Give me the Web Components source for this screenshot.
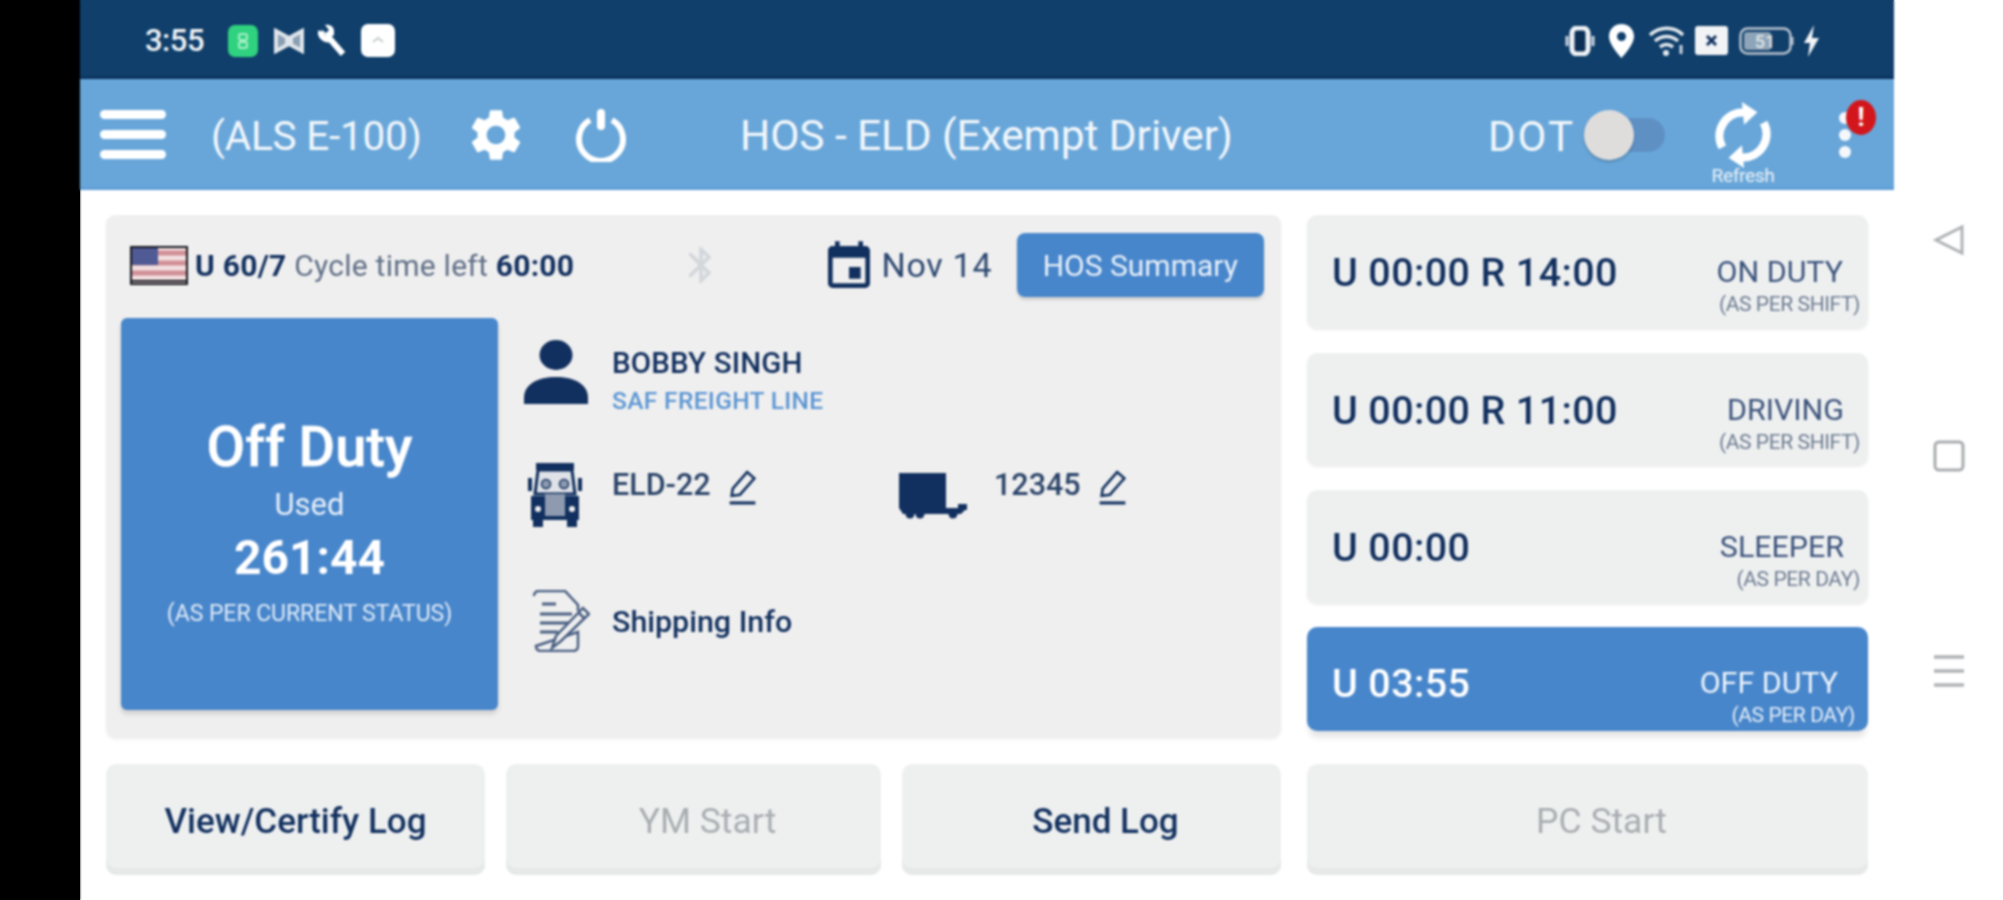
<!DOCTYPE html>
<html>
<head>
<meta charset="utf-8">
<title>HOS - ELD</title>
<style>
    html, body{ margin: 0; height: 100%; overflow: hidden; }
    body{
        font-family: Roboto, "Liberation Sans", sans-serif;
        color: #12305f;
        background:
            linear-gradient(90deg, #000 80px, transparent 80px),
            linear-gradient(90deg, transparent 80px, #103f6b 80px, #103f6b 1894px, transparent 1894px) no-repeat top / 100% 40px,
            #fff;
    }
</style>
</head>
<body>
<eld-app></eld-app>

<template id="tpl-app">
    <style>
        :host{ display: grid; grid-template-columns: 80px 1814px 109px; width: 2003px; height: 900px; filter: blur(1px); }
        .Black{ background: #000; }
        .Phone{ display: flex; flex-direction: column; min-width: 0; }
        .Content{
            display: grid;
            grid-template-columns: 1175px 561px;
            grid-template-rows: 523px 111px;
            column-gap: 26px;
            row-gap: 26px;
            padding: 25px 26px 0 26px;
        }
        .Stack{ display: flex; flex-direction: column; height: 516px; }
        .Buttons{ display: grid; grid-template-columns: 379px 375px 379px; column-gap: 21px; }
    </style>
    <div class="Black"></div>
    <div class="Phone">
        <eld-status-bar></eld-status-bar>
        <eld-toolbar></eld-toolbar>
        <div class="Content">
            <eld-main-card></eld-main-card>
            <div class="Stack">
                <eld-duty-card time="U 00:00 R 14:00" label="ON DUTY" sub="(AS PER SHIFT)" style="height:113px;margin-bottom:25px;--lab:17px"></eld-duty-card>
                <eld-duty-card time="U 00:00 R 11:00" label="DRIVING" sub="(AS PER SHIFT)" style="height:112px;margin-bottom:25px;--lab:16px"></eld-duty-card>
                <eld-duty-card time="U 00:00" label="SLEEPER" sub="(AS PER DAY)" style="height:113px;margin-bottom:24px;--lab:16px;--r:8px"></eld-duty-card>
                <eld-duty-card active time="U 03:55" label="OFF DUTY" sub="(AS PER DAY)" style="height:104px;--lab:17px;--r:13px"></eld-duty-card>
            </div>
            <div class="Buttons">
                <eld-action-button>View/Certify Log</eld-action-button>
                <eld-action-button disabled shift>YM Start</eld-action-button>
                <eld-action-button shift>Send Log</eld-action-button>
            </div>
            <eld-action-button disabled shift>PC Start</eld-action-button>
        </div>
    </div>
    <eld-nav-bar></eld-nav-bar>
</template>

<template id="tpl-status">
    <style>
        :host{ display: flex; align-items: center; height: 79px; background: #103f6b; box-shadow: inset 0 -3px 2px -1px #0a2f58; padding: 2px 74px 0 65px; box-sizing: border-box; color: #eef2f5; }
        .Time{ font-size: 31px; font-weight: 500; letter-spacing: -.5px; width: 60px; margin-right: 23px; }
        svg{ display: block; flex: none; }
        .Left{ display: flex; align-items: center; gap: 14px; }
        .Right{ display: flex; align-items: center; margin-left: auto; }
    </style>
    <span class="Time">3:55</span>
    <div class="Left">
        <svg width="30" height="32" viewBox="0 0 30 32"><rect width="30" height="32" rx="7" fill="#2fd27f"/><rect x="11" y="9" width="8" height="6" rx="2" fill="none" stroke="#a8efc8" stroke-width="2"/><rect x="11" y="17" width="8" height="6" rx="2" fill="none" stroke="#a8efc8" stroke-width="2"/></svg>
        <svg width="30" height="26" viewBox="0 0 30 26" style="margin-left:2px"><path d="M2 3l11 6v8L2 23zM28 3l-11 6v8l11 6z" fill="#8b9fb3" stroke="#dfe5ea" stroke-width="4"/></svg>
        <svg width="30" height="34" viewBox="0 0 30 34"><path d="M3 7a7 7 0 0 0 9 8l13 15" fill="none" stroke="#fff" stroke-width="6"/><path d="M3 5l5 4 3-3-4-5c4-1 9 1 9 6v4l-6 4z" fill="#fff"/></svg>
        <svg width="34" height="33" viewBox="0 0 34 33" style="margin-left:-1px"><rect width="34" height="33" rx="7" fill="#fff"/><path d="M12 18l5-4 5 4" fill="none" stroke="#c6cbcf" stroke-width="2"/></svg>
    </div>
    <div class="Right">
        <svg width="30" height="30" viewBox="0 0 30 30" style="margin-right:13px"><rect x="7" y="2" width="16" height="26" rx="5" fill="#0c2f55" stroke="#eef2f5" stroke-width="5"/><path d="M2 10v10M28 10v10" stroke="#cdd6de" stroke-width="3"/></svg>
        <svg width="27" height="34" viewBox="0 0 27 34" style="margin-right:13px"><path fill-rule="evenodd" d="M13.5 0C6 0 1 5.500 1 12.500 1 21 13.500 34 13.500 34S26 21 26 12.500C26 5.500 21 0 13.500 0zm0 8a4.500 4.500 0 1 1 0 9 4.500 4.500 0 0 1 0-9z" fill="#fff"/></svg>
        <svg width="37" height="34" viewBox="0 0 37 34" style="margin-right:10px"><g fill="none" stroke="#e2e8ed" stroke-width="3.500"><path d="M2 11c10-9 24-9 33 0M7 17c7-6 16-6 23 0M12 23c4-3 9-3 13 0"/></g><circle cx="18" cy="29" r="3" fill="#e2e8ed"/><path d="M33 21v9" stroke="#cdd6de" stroke-width="3"/></svg>
        <svg width="33" height="29" viewBox="0 0 33 29" style="margin-right:11px"><rect width="33" height="29" rx="3" fill="#f1f3f5"/><path d="M12 10l9 9M21 10l-9 9" stroke="#12305f" stroke-width="3"/></svg>
        <svg width="56" height="28" viewBox="0 0 56 28" style="margin-right:8px"><rect x="1.500" y="1.500" width="50" height="25" rx="7" fill="none" stroke="#b9c4cf" stroke-width="2.500"/><rect x="5" y="5" width="27" height="18" rx="3" fill="#8ea4b8"/><path d="M53 10v8" stroke="#b9c4cf" stroke-width="3"/><text x="26" y="21" text-anchor="middle" font-size="18" font-weight="500" fill="#dfe5ea" font-family="Roboto">51</text></svg>
        <svg width="17" height="32" viewBox="0 0 17 32"><path d="M11 0L1 18h6l-2 14 11-19H9z" fill="#f1f3f5"/></svg>
    </div>
</template>

<template id="tpl-toolbar">
    <style>
        :host{ display: flex; align-items: center; height: 111px; background: #68a6d9; box-shadow: inset 0 -4px 3px -2px #5c9bd3; color: #f2f7fb; box-sizing: border-box; padding-left: 20px; position: relative; }
        svg{ display: block; flex: none; }
        .Burger{ display: flex; flex-direction: column; gap: 11px; width: 66px; }
        .Burger i{ display: block; height: 9px; border-radius: 5px; background: #fff; }
        .Unit{ font-size: 40.500px; margin: 2px 0 0 45px; width: 210px; white-space: nowrap; letter-spacing: -.2px; }
        .Title{ font-size: 42.500px; margin: 2px 0 0 112px; white-space: nowrap; width: 748px; letter-spacing: -.1px; }
        .Dot{ font-size: 42px; width: 90px; letter-spacing: 2px; margin-top: 3px; }
        .Toggle{ position: relative; width: 72px; height: 34px; background: #5f90c4; border-radius: 17px; margin-left: 15px; }
        .Toggle::before{ content: ""; position: absolute; left: -9px; top: -8px; width: 50px; height: 50px; border-radius: 50%; background: #dedddc; box-shadow: 0 2px 3px #0003; }
        .Refresh{ margin-left: 45px; width: 66px; display: flex; flex-direction: column; align-items: center; position: relative; height: 66px; }
        .Refresh span{ position: absolute; top: 62px; font-size: 19px; letter-spacing: -.3px; color: #e8f1f8; white-space: nowrap; }
        .Kebab{ position: relative; margin-left: 63px; display: flex; flex-direction: column; gap: 5px; }
        .Kebab i{ display: block; width: 12px; height: 12px; border-radius: 50%; background: #f5f8fb; }
        .Kebab b{ position: absolute; left: 7px; top: -12px; width: 30px; height: 35px; border-radius: 50%; background: #d3161b; color: #fff; font-size: 26px; line-height: 35px; text-align: center; font-weight: 700; }
    </style>
    <div class="Burger"><i></i><i></i><i></i></div>
    <span class="Unit">(ALS E-100)</span>
    <svg width="62" height="62" viewBox="0 0 24 24" fill="#fff" style="margin-left:44px"><path d="M19.14 12.94c.04-.3.06-.61.06-.94 0-.32-.02-.64-.07-.94l2.03-1.58c.18-.14.23-.41.12-.61l-1.92-3.32c-.12-.22-.37-.29-.59-.22l-2.39.96c-.5-.38-1.03-.7-1.62-.94l-.36-2.54c-.04-.24-.24-.41-.48-.41h-3.84c-.24 0-.43.17-.47.41l-.36 2.54c-.59.24-1.13.57-1.62.94l-2.39-.96c-.22-.08-.47 0-.59.22L2.74 8.87c-.12.21-.08.47.12.61l2.03 1.58c-.05.3-.09.63-.09.94s.02.64.07.94l-2.03 1.58c-.18.14-.23.41-.12.61l1.92 3.32c.12.22.37.29.59.22l2.39-.96c.5.38 1.03.7 1.62.94l.36 2.54c.05.24.24.41.48.41h3.84c.24 0 .44-.17.47-.41l.36-2.54c.59-.24 1.13-.56 1.62-.94l2.39.96c.22.08.47 0 .59-.22l1.92-3.32c.12-.22.07-.47-.12-.61l-2.01-1.58zM12 15.6c-1.98 0-3.6-1.62-3.6-3.6s1.62-3.6 3.6-3.6 3.6 1.62 3.6 3.6-1.62 3.6-3.6 3.6z"/></svg>
    <svg width="54" height="54" viewBox="0 0 54 54" fill="none" stroke="#fff" style="margin-left:47px"><path d="M16 12a22 22 0 1 0 22 0" stroke-width="6"/><path d="M27 5v13" stroke-width="8" stroke-linecap="round"/></svg>
    <span class="Title">HOS - ELD (Exempt Driver)</span>
    <span class="Dot">DOT</span>
    <div class="Toggle"></div>
    <div class="Refresh">
        <svg width="66" height="66" viewBox="0 0 64 64" fill="none" stroke="#fff" stroke-width="8"><path d="M12 44A23 23 0 0 1 33 10"/><path d="M52 20A23 23 0 0 1 31 54"/><path d="M31 0l15 10-13 12z" fill="#fff" stroke="none"/><path d="M33 64L18 54l13-12z" fill="#fff" stroke="none"/></svg>
        <span>Refresh</span>
    </div>
    <div class="Kebab"><i></i><i></i><i></i><b>!</b></div>
</template>

<template id="tpl-main">
    <style>
        :host{ display: block; height: 523px; background: #efefef; border-radius: 9px; box-sizing: border-box; padding: 18px 17px 0 15px; box-shadow: 0 2px 3px #0000000d; }
        svg{ display: block; flex: none; }
        .Top{ display: flex; align-items: center; height: 64px; margin-bottom: 21px; padding-left: 9px; }
        .Cycle{ font-size: 30px; letter-spacing: .25px; margin-left: 7px; white-space: nowrap; width: 383px; color: #5f6e86; }
        .Cycle b{ font-weight: 700; color: #12305f; }
        .Bt{ margin-left: 103px; }
        .Cal{ margin: 4px 0 0 98px; }
        .Date{ font-size: 34px; margin-left: 5px; color: #2c4770; width: 138px; letter-spacing: .7px; }
        .Hos{ width: 249px; margin-left: -2px; height: 64px; background: #4886cb; border-radius: 8px; color: #e8f0f9; font-size: 30px; display: flex; align-items: center; justify-content: center; box-shadow: 0 3px 3px #0002; }
        .Body{ display: flex; }
        .Status{ flex: none; width: 377px; height: 392px; background: #4886cb; border-radius: 6px; color: #fff; box-shadow: 0 4px 5px #0002; display: flex; flex-direction: column; align-items: center; padding-top: 100px; box-sizing: border-box; text-align: center; }
        .S1{ font-size: 56px; font-weight: 500; line-height: 58px; -webkit-text-stroke: .5px #fff; }
        .S2{ font-size: 31px; line-height: 40px; margin-top: 9px; color: #e6eff9; }
        .S3{ font-size: 48px; font-weight: 700; line-height: 54px; margin-top: 6px; }
        .S4{ font-size: 23px; line-height: 30px; margin-top: 14px; color: #dfeaf7; white-space: nowrap; letter-spacing: -.05px; }
        .Info{ display: grid; grid-template-columns: 89px 288px 94px auto; grid-template-rows: 123px 127px auto; margin-left: 25px; padding-top: 22px; align-content: start; }
        .Person{ padding-top: 3px; }
        .Name{ font-size: 29.500px; font-weight: 500; line-height: 40px; white-space: nowrap; letter-spacing: .15px; }
        .Co{ font-size: 24.500px; font-weight: 500; line-height: 36px; color: #5b95d3; white-space: nowrap; letter-spacing: .35px; }
        .Ship{ font-size: 30.400px; font-weight: 500; margin-top: 10px; grid-column: 2 / 5; line-height: 44px; }
    </style>
    <div class="Top">
        <svg width="58" height="39" viewBox="0 0 58 39"><rect width="58" height="39" fill="#14161d"/><rect x="2" y="2" width="54" height="35" fill="#f2dfe0"/><path d="M2 7h54M2 17h54M2 27h54" stroke="#d08f96" stroke-width="5"/><rect x="2" y="2" width="26" height="17" fill="#505a94"/><path d="M2 35h54" stroke="#14161d" stroke-width="2"/></svg>
        <span class="Cycle"><b>U 60/7</b> Cycle time left <b>60:00</b></span>
        <svg class="Bt" width="44" height="44" viewBox="0 0 24 24" fill="#d3d7db"><path d="M17.71 7.71L12 2h-1v7.59L6.41 5 5 6.41 10.59 12 5 17.59 6.41 19 11 14.41V22h1l5.71-5.710-4.300-4.290 4.300-4.290zM13 5.830l1.880 1.880L13 9.590V5.830zm1.880 10.460L13 18.170v-3.760l1.880 1.880z"/></svg>
        <svg class="Cal" width="56" height="56" viewBox="0 0 24 24" fill="#12305f"><path d="M17 12h-5v5h5v-5zM16 1v2H8V1H6v2H5c-1.110 0-1.990.9-1.990 2L3 19c0 1.100.89 2 2 2h14c1.100 0 2-.9 2-2V5c0-1.100-.9-2-2-2h-1V1h-2zm3 18H5V8h14v11z"/></svg>
        <span class="Date">Nov 14</span>
        <div class="Hos">HOS Summary</div>
    </div>
    <div class="Body">
        <div class="Status">
            <div class="S1">Off Duty</div>
            <div class="S2">Used</div>
            <div class="S3">261:44</div>
            <div class="S4">(AS PER CURRENT STATUS)</div>
        </div>
        <div class="Info">
            <svg width="66" height="64" viewBox="0 0 66 64" fill="#12305f"><ellipse cx="33" cy="15" rx="16.500" ry="15"/><path d="M1 64v-6c0-14 14-21 32-21s32 7 32 21v6z"/></svg>
            <div class="Person" style="grid-column:2/5">
                <div class="Name">BOBBY SINGH</div>
                <div class="Co">SAF FREIGHT LINE</div>
            </div>

            <svg width="56" height="64" viewBox="0 0 56 64" style="margin-left:4px" fill="#12305f"><path d="M9 0h38v7H9z"/><path d="M11 7h34l3 24H8z" fill="#dfe2e7" stroke="#12305f" stroke-width="3"/><circle cx="19" cy="21" r="4.500" fill="#8d9ab0" stroke="#12305f" stroke-width="1.500"/><circle cx="37" cy="21" r="4.500" fill="#8d9ab0" stroke="#12305f" stroke-width="1.500"/><path d="M1 15h4v13H1zM51 15h4v13h-4z"/><path d="M4 33h48v24H4z"/><rect x="18" y="31" width="20" height="22" fill="#8d9ab0"/><circle cx="11" cy="46" r="3" fill="#efefef"/><circle cx="45" cy="46" r="3" fill="#efefef"/><path d="M6 57h10v7H6zM40 57h10v7H40z"/></svg>
            <eld-edit-value>ELD-22</eld-edit-value>
            <svg width="68" height="46" viewBox="0 0 68 46" style="margin:10px 0 0 -1px" fill="#12305f"><path d="M0 0h47v35H0z"/><path d="M0 35h68l-6 6H4z"/><circle cx="11" cy="41" r="4.500"/><circle cx="21" cy="41" r="4.500"/><circle cx="54" cy="41" r="4.500"/><path d="M59 31h9v6h-9z"/></svg>
            <eld-edit-value>12345</eld-edit-value>

            <svg width="58" height="62" viewBox="0 0 58 62" style="margin-left:9px" fill="none" stroke="#4a5f82" stroke-width="2.500"><path d="M2 6c0-3 2-5 5-5h26l13 14v6M46 42v14c0 3-2 5-5 5H9c-3 0-5-2-5-5z"/><path d="M10 14h14M8 24h32M8 33h30M8 42h18" stroke-width="3"/><path d="M20 58l4-12 27-28 6 6-28 27z" fill="#efefef"/><path d="M46 22l6 6"/></svg>
            <div class="Ship">Shipping Info</div>
        </div>
    </div>
</template>

<template id="tpl-edit">
    <style>
        :host{ display: flex; align-items: flex-start; font-size: 30.500px; font-weight: 500; white-space: nowrap; line-height: 44px; color: #2a4368; }
        svg{ display: block; margin: 6px 0 0 15px; }
    </style>
    <slot></slot>
    <svg width="32" height="36" viewBox="0 0 30 35" fill="none" stroke="#12305f"><path d="M5 26l1-7L20 3l7 6-14 16z" stroke-width="2.500"/><path d="M3 33h25" stroke-width="3"/></svg>
</template>

<template id="tpl-duty">
    <style>
        :host{ display: flex; align-items: flex-start; justify-content: space-between; box-sizing: border-box; background: #eef0f0; border-radius: 10px; padding: 0 var(--r, 8px) 0 25px; color: #12305f; box-shadow: 0 2px 3px #00000014; }
        :host([active]){ background: #4886cb; color: #fff; box-shadow: 0 8px 6px -2px #0000001c; }
        .Time{ font-size: 39.400px; font-weight: 500; line-height: 44px; margin-top: 36px; white-space: nowrap; letter-spacing: .4px; }
        .Side{ display: flex; flex-direction: column; align-items: flex-end; margin-top: 38px; }
        .Label{ font-size: 30.400px; line-height: 38px; margin-right: var(--lab); color: #3b527b; white-space: nowrap; }
        .Sub{ font-size: 21px; line-height: 26px; color: #6e7c92; white-space: nowrap; letter-spacing: -.4px; }
        :host([active]) .Label{ color: #eef4fb; }
        :host([active]) .Sub{ color: #e3edf8; }
        :host([active]) .Time{ margin-top: 35px; }
        :host([active]) .Side{ margin-top: 37px; }
    </style>
    <span class="Time"></span>
    <div class="Side"><span class="Label"></span><span class="Sub"></span></div>
</template>

<template id="tpl-button">
    <style>
        :host{ display: flex; align-items: center; justify-content: center; box-sizing: border-box; height: 111px; padding-top: 3px; background: #eef0f0; border-radius: 10px; font-size: 35px; font-weight: 500; color: #12305f; box-shadow: inset 0 -7px 0 #e7e8e8; white-space: nowrap; }
        :host([shift]){ padding-left: 28px; }
        :host([disabled]){ color: #a9adb1; font-weight: 400; font-size: 35.500px; }
    </style>
    <slot></slot>
</template>

<template id="tpl-nav">
    <style>
        :host{ display: flex; flex-direction: column; align-items: center; gap: 181px; padding-top: 222px; box-sizing: border-box; background: #fff; height: 900px; }
        svg{ display: block; flex: none; }
    </style>
    <svg width="36" height="36" viewBox="0 0 36 36" fill="none" stroke="#b0b3b5" stroke-width="3"><path d="M31 5v26L5 18z"/></svg>
    <svg width="34" height="34" viewBox="0 0 34 34" fill="none" stroke="#a9acae" stroke-width="3"><rect x="3" y="3" width="28" height="28" rx="4"/></svg>
    <svg width="34" height="34" viewBox="0 0 34 34" fill="none" stroke="#b0b3b5" stroke-width="3.500"><path d="M2 3h30M2 17h30M2 31h30"/></svg>
</template>

<script>
function mount(el, id){
    el.attachShadow({mode: "open"});
    el.shadowRoot.appendChild(document.getElementById(id).content.cloneNode(true));
}

class EldDutyCard extends HTMLElement{
    constructor(){
        super();
        mount(this, "tpl-duty");
    }
    connectedCallback(){
        this.shadowRoot.querySelector(".Time").textContent = this.getAttribute("time");
        this.shadowRoot.querySelector(".Label").textContent = this.getAttribute("label");
        this.shadowRoot.querySelector(".Sub").textContent = this.getAttribute("sub");
    }
}

const simple = {
    "eld-status-bar": "tpl-status",
    "eld-toolbar": "tpl-toolbar",
    "eld-main-card": "tpl-main",
    "eld-edit-value": "tpl-edit",
    "eld-action-button": "tpl-button",
    "eld-nav-bar": "tpl-nav",
    "eld-app": "tpl-app"
};

customElements.define("eld-duty-card", EldDutyCard);
for(const name in simple){
    customElements.define(name, class extends HTMLElement{
        constructor(){
            super();
            mount(this, simple[name]);
        }
    });
}
</script>
</body>
</html>
